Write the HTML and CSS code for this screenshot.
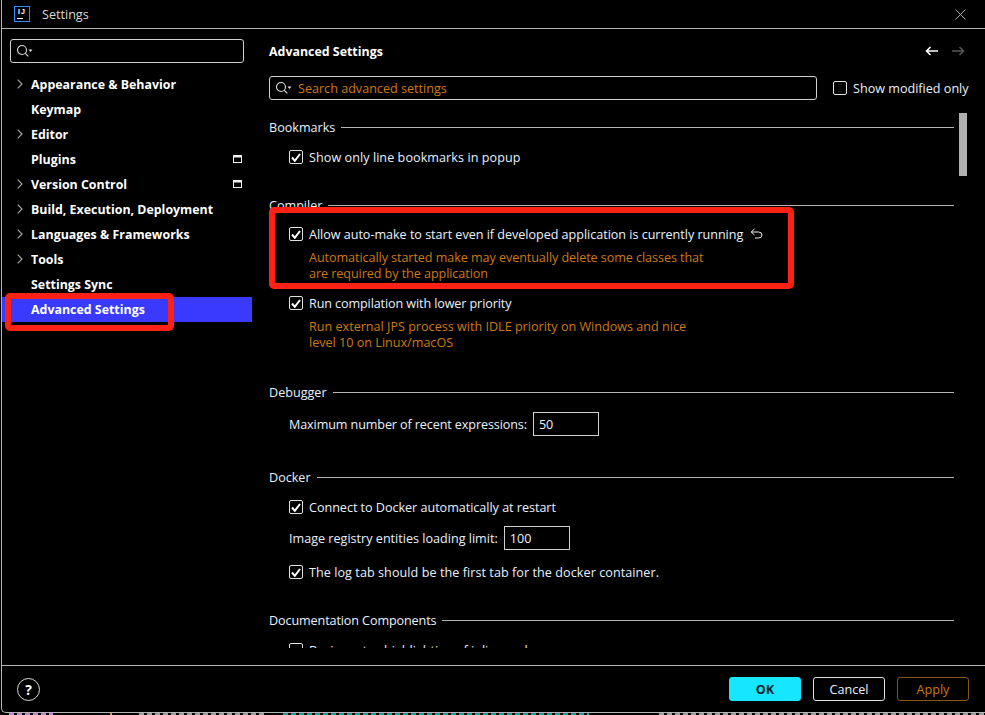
FILE: index.html
```html
<!DOCTYPE html>
<html lang="en">
<head>
<meta charset="utf-8">
<title>Settings</title>
<link rel="stylesheet" href="styles.css">
</head>
<body>
<div class="window">
  <header class="titlebar">
    <span class="logo">IJ</span>
    <span class="title">Settings</span>
    <svg class="close" width="11" height="11" viewBox="0 0 11 11"><path d="M.5.5l10 10M10.500.5l-10 10" stroke="#aaa" fill="none"/></svg>
  </header>
  <div class="main">
    <aside class="sidebar">
      <div class="search side-search">
        <svg class="search-icon" width="17" height="14" viewBox="0 0 17 14"><circle cx="6" cy="6" r="4.500" fill="none" stroke="#ddd" stroke-width="1.100"/><path d="M9.300 9.300l3 3" stroke="#ddd" stroke-width="1.200"/><path d="M12.500 5.500h4l-2 2.500z" fill="#ddd"/></svg>
      </div>
      <nav class="tree">
        <div class="node"><svg class="chev" width="6" height="10" viewBox="0 0 6 10"><path d="M.7.7L5 5 .7 9.300" fill="none" stroke="#aaa" stroke-width="1.100"/></svg><span>Appearance &amp; Behavior</span></div>
        <div class="node"><span>Keymap</span></div>
        <div class="node"><svg class="chev" width="6" height="10" viewBox="0 0 6 10"><path d="M.7.7L5 5 .7 9.300" fill="none" stroke="#aaa" stroke-width="1.100"/></svg><span>Editor</span></div>
        <div class="node"><span>Plugins</span><svg class="proj" width="9" height="8" viewBox="0 0 9 8"><path d="M0 0h9v8H0z M1 2.500v4.500h7V2.500z" fill="#f0f0f0" fill-rule="evenodd"/></svg></div>
        <div class="node"><svg class="chev" width="6" height="10" viewBox="0 0 6 10"><path d="M.7.7L5 5 .7 9.300" fill="none" stroke="#aaa" stroke-width="1.100"/></svg><span>Version Control</span><svg class="proj" width="9" height="8" viewBox="0 0 9 8"><path d="M0 0h9v8H0z M1 2.500v4.500h7V2.500z" fill="#f0f0f0" fill-rule="evenodd"/></svg></div>
        <div class="node"><svg class="chev" width="6" height="10" viewBox="0 0 6 10"><path d="M.7.7L5 5 .7 9.300" fill="none" stroke="#aaa" stroke-width="1.100"/></svg><span>Build, Execution, Deployment</span></div>
        <div class="node"><svg class="chev" width="6" height="10" viewBox="0 0 6 10"><path d="M.7.7L5 5 .7 9.300" fill="none" stroke="#aaa" stroke-width="1.100"/></svg><span>Languages &amp; Frameworks</span></div>
        <div class="node"><svg class="chev" width="6" height="10" viewBox="0 0 6 10"><path d="M.7.7L5 5 .7 9.300" fill="none" stroke="#aaa" stroke-width="1.100"/></svg><span>Tools</span></div>
        <div class="node"><span>Settings Sync</span></div>
        <div class="node selected"><span>Advanced Settings</span></div>
      </nav>
    </aside>
    <section class="panel">
      <div class="panel-head">
        <h1 class="panel-title">Advanced Settings</h1>
        <div class="nav-arrows">
          <svg width="14" height="10" viewBox="0 0 14 10"><path d="M13 5H1.500M5.500 1L1.500 5l4 4" fill="none" stroke="#fff" stroke-width="1.600"/></svg>
          <svg width="14" height="10" viewBox="0 0 14 10"><path d="M1 5h11.500M8.500 1l4 4-4 4" fill="none" stroke="#555" stroke-width="1.600"/></svg>
        </div>
      </div>
      <div class="filter-row">
        <div class="search main-search">
          <svg class="search-icon" width="17" height="14" viewBox="0 0 17 14"><circle cx="6" cy="6" r="4.500" fill="none" stroke="#ddd" stroke-width="1.100"/><path d="M9.300 9.300l3 3" stroke="#ddd" stroke-width="1.200"/><path d="M12.500 5.500h4l-2 2.500z" fill="#ddd"/></svg>
          <span class="placeholder">Search advanced settings</span>
        </div>
        <label class="check modified"><span class="box"></span><span>Show modified only</span></label>
      </div>
      <div class="scroll">
        <div class="content">
          <div class="group">
            <div class="legend"><span>Bookmarks</span></div>
            <div class="opt check"><span class="box"><svg width="10" height="9" viewBox="0 0 10 9"><path d="M1 4.500L3.800 7.800 9 1" fill="none" stroke="#fff" stroke-width="2"/></svg></span><span class="wide">Show only line bookmarks in popup</span></div>
          </div>
          <div class="group compiler">
            <div class="legend"><span>Compiler</span></div>
            <div class="opt check tight"><span class="box"><svg width="10" height="9" viewBox="0 0 10 9"><path d="M1 4.500L3.800 7.800 9 1" fill="none" stroke="#fff" stroke-width="2"/></svg></span><span class="snug">Allow auto-make to start even if developed application is currently running</span>
              <svg class="undo" width="13" height="12" viewBox="0 0 13 12"><path d="M4.500 1L1.200 4l3.300 3M1.500 4H8.500q3.500 0 3.500 3T8.500 10H5" fill="none" stroke="#eee" stroke-width="1"/></svg></div>
            <p class="desc condensed">Automatically started make may eventually delete some classes that<br>are required by the application</p>
            <div class="opt check run"><span class="box"><svg width="10" height="9" viewBox="0 0 10 9"><path d="M1 4.500L3.800 7.800 9 1" fill="none" stroke="#fff" stroke-width="2"/></svg></span><span class="narrow">Run compilation with lower priority</span></div>
            <p class="desc">Run external JPS process with IDLE priority on Windows and nice<br>level 10 on Linux/macOS</p>
          </div>
          <div class="group debugger">
            <div class="legend"><span>Debugger</span></div>
            <div class="opt field roomy"><span class="narrow">Maximum number of recent expressions:</span><span class="num">50</span></div>
          </div>
          <div class="group docker">
            <div class="legend"><span>Docker</span></div>
            <div class="opt check"><span class="box"><svg width="10" height="9" viewBox="0 0 10 9"><path d="M1 4.500L3.800 7.800 9 1" fill="none" stroke="#fff" stroke-width="2"/></svg></span><span class="snug">Connect to Docker automatically at restart</span></div>
            <div class="opt field near"><span>Image registry entities loading limit:</span><span class="num">100</span></div>
            <div class="opt check second"><span class="box"><svg width="10" height="9" viewBox="0 0 10 9"><path d="M1 4.500L3.800 7.800 9 1" fill="none" stroke="#fff" stroke-width="2"/></svg></span><span class="wide">The log tab should be the first tab for the docker container.</span></div>
          </div>
          <div class="group docs">
            <div class="legend"><span class="narrow">Documentation Components</span></div>
            <div class="opt check"><span class="box"></span><span>Basic syntax highlighting of inline code</span></div>
          </div>
        </div>
        <div class="scrollbar"><div class="thumb"></div></div>
      </div>
    </section>
  </div>
  <footer class="footer">
    <span class="help">?</span>
    <div class="actions">
      <button class="btn ok">OK</button>
      <button class="btn">Cancel</button>
      <button class="btn apply">Apply</button>
    </div>
  </footer>
  <div class="mark mark-nav"></div>
  <div class="mark mark-opt"></div>
</div>
<div class="backdrop">
  <span class="code purple"></span>
  <span class="code tick"></span>
  <span class="code grey-a"></span>
  <span class="code teal"></span>
  <span class="code grey-b"></span>
</div>
</body>
</html>
```

FILE: styles.css
```css
* { box-sizing: border-box; }
html, body { margin: 0; height: 100%; background: #000; }
body {
  font-family: "Open Sans", "Noto Sans", sans-serif;
  font-size: 12.6px;
  color: #e8f2ff;
  overflow: hidden;
}
.window {
  position: relative;
  width: 984px;
  height: 713px;
  margin-left: 1px;
  border-left: 1px solid #b5b5b5;
  border-bottom: 1px solid #b5b5b5;
  border-bottom-left-radius: 5px;
  display: flex;
  flex-direction: column;
  overflow: hidden;
}
.titlebar {
  height: 29px;
  flex: none;
  border-bottom: 1px solid #b5b5b5;
  display: flex;
  align-items: center;
  padding-left: 12px;
  padding-right: 19px;
}
.logo {
  width: 16px;
  height: 16px;
  border: 1px solid #2f8cff;
  position: relative;
  font: 700 7px/9px "Liberation Sans", sans-serif;
  color: #fff;
  text-align: center;
  letter-spacing: 1px;
}
.logo::after {
  content: "";
  position: absolute;
  left: 2px;
  top: 11px;
  width: 6px;
  height: 1px;
  background: #fff;
}
.title { margin-left: 12px; font-size: 12.6px; color: #d8d8d8; }
.close { margin-left: auto; }
.main { flex: 1; display: flex; min-height: 0; }
.sidebar { width: 250px; flex: none; padding: 10px 0 0; }
.search {
  border: 1px solid #d0d0d0;
  border-radius: 3px;
  height: 24px;
  display: flex;
  align-items: center;
  padding-left: 5px;
}
.side-search { margin: 0 8px; width: 234px; }
.tree { margin-top: 9px; }
.node {
  height: 25px;
  display: flex;
  align-items: center;
  padding: 0 10px 1px 29px;
  position: relative;
  font-size: 12.4px;
  font-weight: 700;
  color: #fff;
}
.chev { position: absolute; left: 15px; top: 7px; }
.proj { margin-left: auto; }
.selected { background: #3a3aff; }
.panel { flex: 1; min-width: 0; padding-left: 17px; display: flex; flex-direction: column; }
.panel-head { height: 44px; display: flex; align-items: center; padding-right: 20px; flex: none; }
.panel-title { margin: 0; font-size: 12.4px; font-weight: 700; color: #fff; }
.nav-arrows { margin-left: auto; display: flex; gap: 12px; }
.filter-row { display: flex; align-items: center; flex: none; margin-top: 3px; }
.main-search { width: 548px; }
.placeholder { margin-left: 6px; color: #cc7a14; }
.check { display: flex; align-items: center; gap: 6px; }
.modified { margin-left: 16px; }
.box {
  width: 14px;
  height: 14px;
  border: 1px solid #e0e0e0;
  border-radius: 2px;
  display: flex;
  align-items: center;
  justify-content: center;
  flex: none;
}
.scroll { position: relative; height: 538px; margin-top: 10px; overflow: hidden; flex: none; }
.content { width: 685px; padding-top: 8px; }
.legend {
  display: flex;
  align-items: center;
  gap: 6px;
  height: 18px;
}
.legend::after { content: ""; flex: 1; height: 1px; background: #b5b5b5; }
.opt { margin-left: 20px; height: 24px; margin-top: 9px; }
.tight { margin-top: 8px; }
.roomy { margin-top: 11px; }
.near { margin-top: 7px; }
.run { margin-top: 9px; }
.undo { margin-left: 1px; }
.desc { margin: 4px 0 0 40px; line-height: 16px; color: #cc7a14; }
.condensed { letter-spacing: -0.07px; }
.wide { letter-spacing: 0.06px; }
.snug { letter-spacing: -0.03px; }
.narrow { letter-spacing: -0.11px; }
.second { margin-top: 10px; }
.compiler { margin-top: 27px; }
.debugger { margin-top: 32px; }
.docker { margin-top: 32px; }
.docs { margin-top: 27px; }
.field { display: flex; align-items: center; gap: 6px; }
.num {
  width: 66px;
  height: 24px;
  border: 1px solid #d0d0d0;
  display: flex;
  align-items: center;
  padding-left: 5px;
}
.scrollbar { position: absolute; left: 690px; top: 3px; width: 8px; height: 63px; }
.thumb { height: 100%; background: #b0b0b0; }
.footer {
  border-top: 1px solid #b5b5b5;
  flex: none;
  height: 47px;
  display: flex;
  align-items: center;
  padding-left: 15px;
  padding-right: 16px;
}
.help {
  width: 23px;
  height: 23px;
  border: 1px solid #d8d8d8;
  border-radius: 50%;
  display: flex;
  align-items: center;
  justify-content: center;
  font-weight: 700;
  font-size: 14px;
  color: #fff;
}
.actions { margin-left: auto; display: flex; gap: 12px; }
.btn {
  width: 72px;
  height: 24px;
  border: 1px solid #e0e0e0;
  border-radius: 3px;
  background: #000;
  color: #e8f2ff;
  font: inherit;
  padding: 0;
}
.ok { background: #16e6ff; border-color: #16e6ff; color: #04222a; font-weight: 700; }
.apply { color: #cc7a14; border-color: #8a5514; }
.mark { position: absolute; border: 6px solid #ff2016; border-radius: 5px; }
.mark-nav { left: 3px; top: 293px; width: 169px; height: 38px; }
.mark-opt { left: 267px; top: 207px; width: 525px; height: 82px; }
.backdrop { height: 2px; display: flex; overflow: hidden; }
.code {
  height: 2px;
  background-image: repeating-linear-gradient(90deg, currentColor 0 5px, transparent 5px 8px);
}
.purple { color: #c080d8; width: 46px; margin-left: 9px; }
.tick { color: #c89050; width: 2px; margin-left: 57px; }
.grey-a { color: #9a9a9a; width: 130px; margin-left: 27px; }
.teal { color: #1f9a9a; width: 320px; margin-left: 19px; }
.grey-b { color: #9a9a9a; width: 340px; margin-left: 70px; }
```
